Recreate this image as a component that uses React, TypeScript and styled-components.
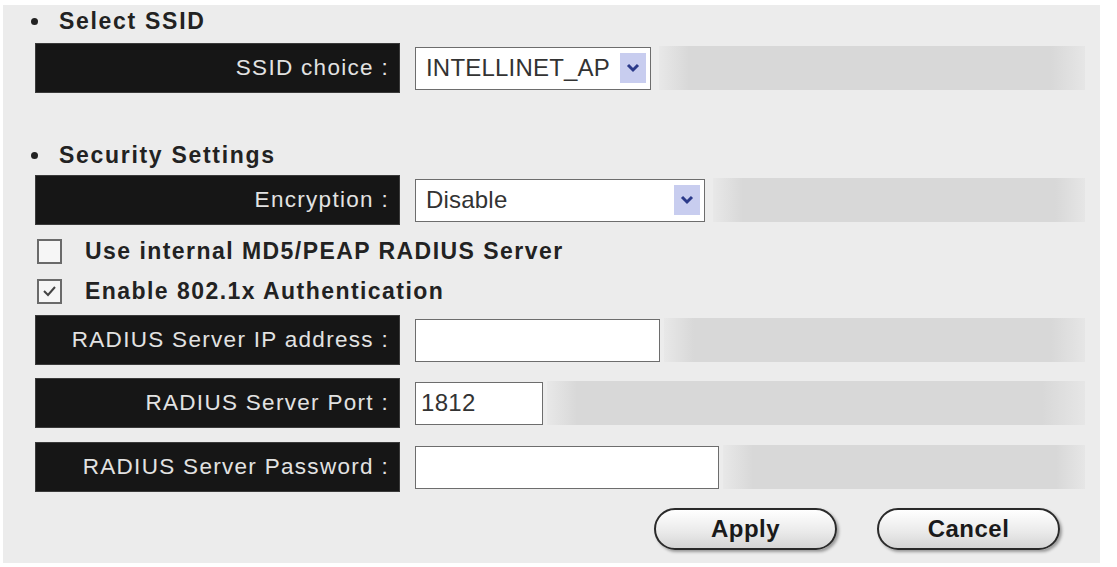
import React from "react";
import styled, { createGlobalStyle } from "styled-components";

const Global = createGlobalStyle`
  html, body { margin: 0; padding: 0; background: #ffffff; }
  body { font-family: "Liberation Sans", Arial, sans-serif; }
  * { box-sizing: border-box; }
`;

const Panel = styled.div`
  margin: 5px 17px 0 3px;
  height: 558px;
  background: #ececec;
  padding: 0 0 0 32px;
  display: flex;
  flex-direction: column;
`;

const Heading = styled.div<{ $top: number }>`
  margin-top: ${(p) => p.$top}px;
  height: 32px;
  display: flex;
  align-items: center;
  font-weight: bold;
  font-size: 23px;
  letter-spacing: 1.7px;
  color: #222;
`;

const Bullet = styled.span`
  width: 7px;
  height: 7px;
  border-radius: 50%;
  background: #222;
  margin-right: 21px;
  margin-left: -4px;
`;

const Row = styled.div<{ $top: number }>`
  margin-top: ${(p) => p.$top}px;
  width: 1050px;
  height: 50px;
  display: flex;
  align-items: stretch;
`;

const Label = styled.div`
  width: 365px;
  background: #161616;
  border: 1px solid #3a3a3a;
  color: #e2e2e2;
  font-size: 22.5px;
  letter-spacing: 1.3px;
  display: flex;
  align-items: center;
  justify-content: flex-end;
  padding-right: 10px;
`;

const Field = styled.div`
  display: flex;
  align-items: center;
  padding-left: 15px;
`;

const Filler = styled.div`
  flex: 1;
  margin: 3px 0;
  background: linear-gradient(to right, #e8e8e8 0, #d8d8d8 30px, #d8d8d8 92%, #e6e6e6 100%);
`;

const SelectBox = styled.div<{ $w: number }>`
  width: ${(p) => p.$w}px;
  height: 43px;
  background: #ffffff;
  border: 1px solid #6d6d6d;
  display: flex;
  align-items: center;
  justify-content: space-between;
  padding: 0 4px 0 10px;
  font-size: 24px;
  letter-spacing: 0.2px;
  color: #333;
  margin-right: 8px;
`;

const Arrow = styled.div`
  width: 26px;
  height: 30px;
  background: #c8cdef;
  display: flex;
  align-items: center;
  justify-content: center;
`;

const TextInput = styled.div<{ $w: number }>`
  width: ${(p) => p.$w}px;
  height: 43px;
  background: #ffffff;
  border: 1px solid #6d6d6d;
  display: flex;
  align-items: center;
  padding-left: 5px;
  font-size: 24px;
  letter-spacing: 0.3px;
  color: #333;
  margin-right: 4px;
`;

const CheckRow = styled.div<{ $top: number }>`
  margin-top: ${(p) => p.$top}px;
  height: 26px;
  display: flex;
  align-items: center;
  margin-left: 2px;
  font-weight: bold;
  font-size: 23px;
  letter-spacing: 1.45px;
  color: #222;
`;

const Box = styled.div`
  width: 25px;
  height: 25px;
  border: 2px solid #6a6a6a;
  background: #f6f6f6;
  margin-right: 23px;
  display: flex;
  align-items: center;
  justify-content: center;
`;

const ButtonBar = styled.div`
  margin-top: 16px;
  width: 1050px;
  display: flex;
  justify-content: flex-end;
  gap: 40px;
  padding-right: 25px;
`;

const PillButton = styled.button`
  width: 183px;
  height: 42px;
  border-radius: 21px;
  border: 2px solid #2a2a2a;
  background: linear-gradient(#ffffff, #e9e9e9 60%, #d5d5d5);
  box-shadow: 2px 2px 3px rgba(0, 0, 0, 0.35);
  font-family: "Liberation Sans", Arial, sans-serif;
  font-weight: bold;
  font-size: 24px;
  letter-spacing: 0.5px;
  color: #1a1a1a;
  padding: 0;
`;

const Chevron = () => (
  <svg width="14" height="10" viewBox="0 0 14 10">
    <path d="M2 2 L7 7 L12 2" stroke="#2b3a8a" strokeWidth="3" fill="none" />
  </svg>
);

const Tick = () => (
  <svg width="15" height="13" viewBox="0 0 15 13">
    <path d="M2 6 L6 10 L13 2" stroke="#444" strokeWidth="2" fill="none" />
  </svg>
);

export default function App() {
  return (
    <>
      <Global />
      <Panel>
        <Heading $top={0}>
          <Bullet />
          Select SSID
        </Heading>
        <Row $top={6}>
          <Label>SSID choice :</Label>
          <Field>
            <SelectBox $w={236}>
              INTELLINET_AP
              <Arrow>
                <Chevron />
              </Arrow>
            </SelectBox>
          </Field>
          <Filler />
        </Row>

        <Heading $top={46}>
          <Bullet />
          Security Settings
        </Heading>
        <Row $top={4}>
          <Label>Encryption :</Label>
          <Field>
            <SelectBox $w={290}>
              Disable
              <Arrow>
                <Chevron />
              </Arrow>
            </SelectBox>
          </Field>
          <Filler />
        </Row>

        <CheckRow $top={13}>
          <Box />
          Use internal MD5/PEAP RADIUS Server
        </CheckRow>
        <CheckRow $top={14}>
          <Box>
            <Tick />
          </Box>
          Enable 802.1x Authentication
        </CheckRow>

        <Row $top={11}>
          <Label>RADIUS Server IP address :</Label>
          <Field>
            <TextInput $w={245} />
          </Field>
          <Filler />
        </Row>
        <Row $top={13}>
          <Label>RADIUS Server Port :</Label>
          <Field>
            <TextInput $w={128}>1812</TextInput>
          </Field>
          <Filler />
        </Row>
        <Row $top={14}>
          <Label>RADIUS Server Password :</Label>
          <Field>
            <TextInput $w={304} />
          </Field>
          <Filler />
        </Row>

        <ButtonBar>
          <PillButton>Apply</PillButton>
          <PillButton>Cancel</PillButton>
        </ButtonBar>
      </Panel>
    </>
  );
}
